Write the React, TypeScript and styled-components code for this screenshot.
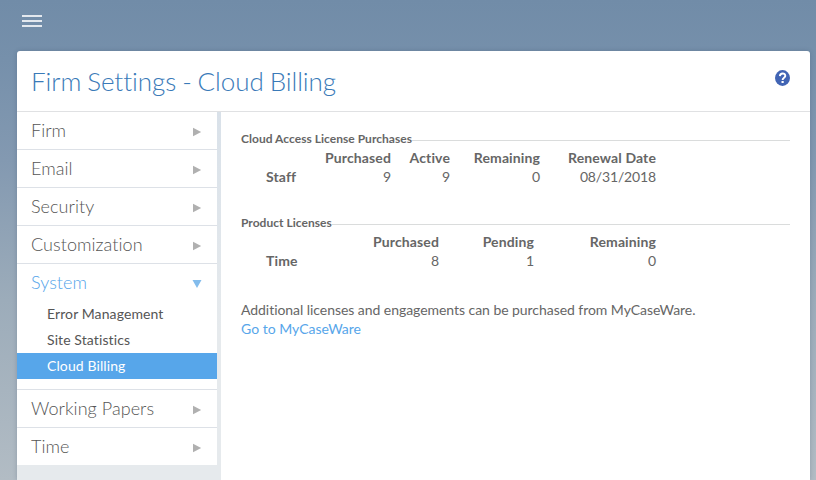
import React from "react";
import styled, { createGlobalStyle } from "styled-components";

const GlobalStyle = createGlobalStyle`
  * { box-sizing: border-box; }
  html, body, #root { height: 100%; }
  body {
    margin: 0;
    overflow: hidden;
    font-family: Lato, "Liberation Sans", sans-serif;
    font-size: 14px;
    font-variant-ligatures: none;
    color: #666;
  }
`;

const Page = styled.div`
  height: 100%;
  display: flex;
  flex-direction: column;
  background: linear-gradient(#718ca8 0, #7690ab 60px, #8399b1 160px, #9cacba 300px, #b2bcc4 480px);
`;

const TopBar = styled.header`
  flex: 0 0 51px;
  padding: 15px 22px 0;
`;

const MenuButton = styled.button`
  display: flex;
  flex-direction: column;
  gap: 3px;
  width: 20px;
  padding: 0;
  border: 0;
  background: none;
`;

const MenuBar = styled.span`
  height: 2px;
  background: #e3e8ee;
`;

const Panel = styled.main`
  flex: 1;
  min-height: 0;
  display: flex;
  flex-direction: column;
  margin: 0 6px 0 17px;
  overflow: hidden;
  border-radius: 3px 3px 0 0;
  background: #fff;
  box-shadow: 0 0 4px rgba(40, 60, 90, 0.25);
`;

const PanelHeader = styled.div`
  flex: 0 0 61px;
  display: flex;
  justify-content: space-between;
  padding: 0 20px 0 14px;
  border-bottom: 1px solid #e0e1e3;
`;

const Title = styled.h1`
  margin: 0;
  font-size: 26px;
  font-weight: 300;
  line-height: 60px;
  letter-spacing: -0.04px;
  word-spacing: -1.2px;
  color: #3a7ab8;
  white-space: nowrap;
`;

const HelpIcon = styled.svg`
  width: 15px;
  height: 16px;
  margin-top: 19px;
`;

const Columns = styled.div`
  flex: 1;
  min-height: 0;
  display: flex;
`;

const Sidebar = styled.nav`
  flex: 0 0 204px;
  padding-right: 4px;
  background: linear-gradient(#d9e1e9, #e6eaed 220px);
`;

const Section = styled.section`
  background: #fff;
  border-bottom: 1px solid #dde1e7;
  &:last-child { border-bottom: 0; }
`;

const SectionHeading = styled.div<{ $open?: boolean }>`
  height: 37px;
  display: flex;
  align-items: center;
  justify-content: space-between;
  padding: 0 15px 0 14px;
  font-size: 18px;
  font-weight: 300;
  line-height: 37px;
  letter-spacing: 0.05px;
  color: ${(p) => (p.$open ? "#55a5ea" : "#555")};
`;

const Arrow = styled.svg`
  width: 10px;
  height: 10px;
  margin-top: 3px;
`;

const SubList = styled.ul`
  margin: 0;
  padding: 0 0 10px;
  list-style: none;
`;

const SubItem = styled.li<{ $active?: boolean }>`
  padding-left: 30px;
  line-height: 26px;
  letter-spacing: 0.1px;
  color: ${(p) => (p.$active ? "#fff" : "#555")};
  background: ${(p) => (p.$active ? "#57a6ea" : "transparent")};
`;

const Content = styled.div`
  flex: 1;
  padding: 19px 20px 0;
`;

const Group = styled.section`
  height: 84px;
`;

const Legend = styled.h2`
  display: flex;
  align-items: center;
  height: 19px;
  margin: 0 0 -2px;
  font-size: 12px;
  font-weight: 700;
  line-height: 16px;
  letter-spacing: 0.03px;
  white-space: nowrap;
  &::after {
    content: "";
    flex: 1;
    height: 1px;
    background: #dadcdc;
  }
`;

const LegendText = styled.span`
  padding-bottom: 3px;
`;

const Table = styled.div<{ $columns: string }>`
  display: grid;
  grid-template-columns: ${(p) => p.$columns};
  padding-left: 25px;
  line-height: 19px;
  text-align: right;
  white-space: nowrap;
`;

const Head = styled.strong<{ $row?: boolean }>`
  text-align: ${(p) => (p.$row ? "left" : "right")};
  letter-spacing: 0.12px;
`;

const Value = styled.span`
  letter-spacing: -0.15px;
`;

const Note = styled.p`
  margin: 1px 0 0;
  line-height: 19px;
  letter-spacing: -0.05px;
`;

const Link = styled.a`
  display: block;
  letter-spacing: 0;
  color: #57a6ea;
`;

type LicenseTableProps = {
  title: string;
  columns: string;
  headings: string[];
  name: string;
  values: string[];
};

function LicenseTable({ title, columns, headings, name, values }: LicenseTableProps) {
  return (
    <Group>
      <Legend><LegendText>{title}</LegendText></Legend>
      <Table $columns={columns}>
        <span />
        {headings.map((h) => <Head key={h}>{h}</Head>)}
        <Head $row>{name}</Head>
        {values.map((v, i) => <Value key={i}>{v}</Value>)}
      </Table>
    </Group>
  );
}

const sections = [
  { name: "Firm" },
  { name: "Email" },
  { name: "Security" },
  { name: "Customization" },
  { name: "System", items: ["Error Management", "Site Statistics", "Cloud Billing"] },
  { name: "Working Papers" },
  { name: "Time" },
];

export default function App() {
  return (
    <Page>
      <GlobalStyle />
      <TopBar>
        <MenuButton aria-label="Menu">
          <MenuBar /><MenuBar /><MenuBar />
        </MenuButton>
      </TopBar>
      <Panel>
        <PanelHeader>
          <Title>Firm Settings - Cloud Billing</Title>
          <HelpIcon viewBox="0 0 15 16">
            <ellipse cx="7.5" cy="8" rx="7.5" ry="7.9" fill="#4164b4" />
            <path d="M4.9 6.1C5 2.6 10.4 2.7 10.3 5.9C10.2 7.8 7.6 7.6 7.6 9.9" fill="none" stroke="#fff" strokeWidth="1.9" />
            <rect x="6.5" y="11" width="2.2" height="2" fill="#fff" />
          </HelpIcon>
        </PanelHeader>
        <Columns>
          <Sidebar>
            {sections.map(({ name, items }) => (
              <Section key={name}>
                <SectionHeading $open={!!items}>
                  {name}
                  <Arrow viewBox="0 0 10 10">
                    {items
                      ? <path d="M.5 1h9L5 9z" fill="#83bcec" />
                      : <path d="M1 .8v8.4L9.2 5z" fill="#b0b0b0" />}
                  </Arrow>
                </SectionHeading>
                {items && (
                  <SubList>
                    {items.map((item) => (
                      <SubItem key={item} $active={item === "Cloud Billing"}>{item}</SubItem>
                    ))}
                  </SubList>
                )}
              </Section>
            ))}
          </Sidebar>
          <Content>
            <LicenseTable
              title="Cloud Access License Purchases"
              columns="50px 75px 59px 90px 116px"
              headings={["Purchased", "Active", "Remaining", "Renewal Date"]}
              name="Staff"
              values={["9", "9", "0", "08/31/2018"]}
            />
            <LicenseTable
              title="Product Licenses"
              columns="90px 83px 95px 122px"
              headings={["Purchased", "Pending", "Remaining"]}
              name="Time"
              values={["8", "1", "0"]}
            />
            <Note>
              Additional licenses and engagements can be purchased from MyCaseWare.
              <Link>Go to MyCaseWare</Link>
            </Note>
          </Content>
        </Columns>
      </Panel>
    </Page>
  );
}
